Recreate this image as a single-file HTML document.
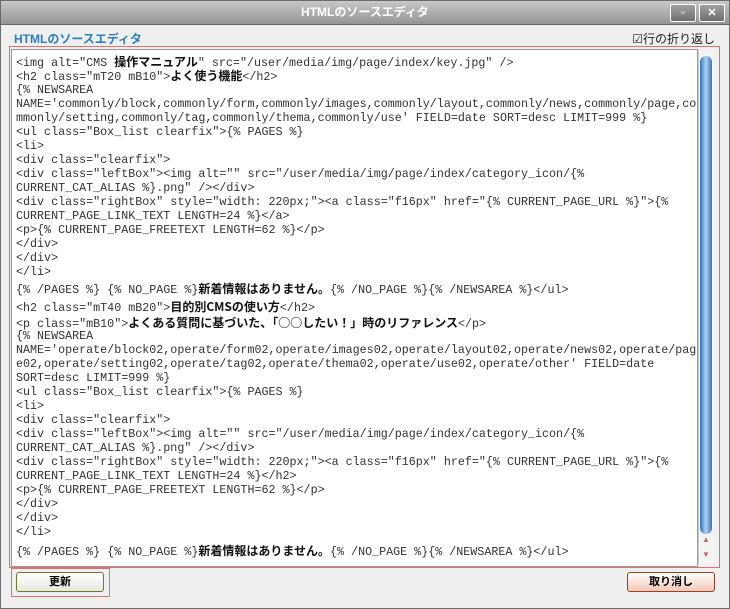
<!DOCTYPE html>
<html><head><meta charset="utf-8"><style>
body{margin:0;width:730px;height:609px;background:#ededed;font-family:"Liberation Sans","Noto Sans CJK JP",sans-serif;position:relative;overflow:hidden}
.win{position:absolute;left:0;top:0;width:728px;height:607px;border:1px solid #6b6b6b;background:#efefef}
.tb{height:23px;background:linear-gradient(#c8c8c8,#959595);border-bottom:1px solid #666;color:#fff;font-weight:bold;font-size:12px;text-align:center;line-height:23px}
.btn{position:absolute;top:3px;width:24px;height:16px;border:1px solid #fff;border-radius:2px;background:linear-gradient(#a0a0a0,#707070);color:#fff;font-size:11px;line-height:16px;text-align:center;font-weight:bold}
.h{position:absolute;left:13px;top:30px;color:#2f7fc0;font-weight:bold;font-size:12px;line-height:16px}
.wrap{position:absolute;right:14px;top:30px;font-size:12px;color:#222;line-height:16px}
.red{position:absolute;left:8px;top:45px;width:709px;height:520px;border:1px solid #e07070}
.ta{position:absolute;left:10px;top:48px;width:685px;height:516px;background:#fff;border:1px solid #9a9a9a;overflow:hidden}
.code{position:absolute;left:4px;top:4px;font-family:"Liberation Mono","Noto Sans CJK JP",monospace;font-size:11.7px;color:#333}
.code div{height:14px;line-height:14px;white-space:pre}
.code b{font-family:"Noto Sans CJK JP",sans-serif;font-weight:bold;color:#111;font-size:12px}
.sb{position:absolute;left:697px;top:49px;width:15px;height:514px;background:#f3f3f3;border-left:1px solid #ccc}
.th{position:absolute;left:1px;top:6px;width:12px;height:478px;border-radius:6px;background:linear-gradient(90deg,#3b6fb8,#a8d4f5 50%,#3b6fb8);}
.b1{position:absolute;left:15px;top:571px;width:86px;height:18px;border:1px solid #6b7a2c;border-radius:3px;background:linear-gradient(#fff,#e8e8de);font-size:11px;text-align:center;line-height:18px;font-weight:bold}
.b1o{position:absolute;left:10px;top:567px;width:97px;height:27px;border:1px solid #e07070}
.b2{position:absolute;left:626px;top:571px;width:86px;height:18px;border:1px solid #a04020;border-radius:3px;background:linear-gradient(#fff,#f3c8b8);font-size:11px;text-align:center;line-height:18px;font-weight:bold}
</style></head><body><div class="win">
<div class="tb">HTMLのソースエディタ</div>
<div class="btn" style="left:669px">▫</div><div class="btn" style="left:698px">✕</div>
<div class="h">HTMLのソースエディタ</div>
<div class="wrap">☑行の折り返し</div>
<div class="red"></div>
<div class="ta"><div class="code"><div style="height:15px;line-height:15px">&lt;img alt="CMS <b>操作マニュアル</b>" src="/user/media/img/page/index/key.jpg" /&gt;</div><div>&lt;h2 class="mT20 mB10"&gt;<b>よく使う機能</b>&lt;/h2&gt;</div><div>{% NEWSAREA</div><div>NAME='commonly/block,commonly/form,commonly/images,commonly/layout,commonly/news,commonly/page,co</div><div>mmonly/setting,commonly/tag,commonly/thema,commonly/use' FIELD=date SORT=desc LIMIT=999 %}</div><div>&lt;ul class="Box_list clearfix"&gt;{% PAGES %}</div><div>&lt;li&gt;</div><div>&lt;div class="clearfix"&gt;</div><div>&lt;div class="leftBox"&gt;&lt;img alt="" src="/user/media/img/page/index/category_icon/{%</div><div>CURRENT_CAT_ALIAS %}.png" /&gt;&lt;/div&gt;</div><div>&lt;div class="rightBox" style="width: 220px;"&gt;&lt;a class="f16px" href="{% CURRENT_PAGE_URL %}"&gt;{%</div><div>CURRENT_PAGE_LINK_TEXT LENGTH=24 %}&lt;/a&gt;</div><div>&lt;p&gt;{% CURRENT_PAGE_FREETEXT LENGTH=62 %}&lt;/p&gt;</div><div>&lt;/div&gt;</div><div>&lt;/div&gt;</div><div style="height:15px">&lt;/li&gt;</div><div style="height:18px;line-height:18px">{% /PAGES %} {% NO_PAGE %}<b>新着情報はありません。</b>{% /NO_PAGE %}{% /NEWSAREA %}&lt;/ul&gt;</div><div style="height:18px;line-height:18px">&lt;h2 class="mT40 mB20"&gt;<b>目的別CMSの使い方</b>&lt;/h2&gt;</div><div style="height:13px;line-height:13px">&lt;p class="mB10"&gt;<b>よくある質問に基づいた、「○○したい！」時のリファレンス</b>&lt;/p&gt;</div><div>{% NEWSAREA</div><div>NAME='operate/block02,operate/form02,operate/images02,operate/layout02,operate/news02,operate/pag</div><div>e02,operate/setting02,operate/tag02,operate/thema02,operate/use02,operate/other' FIELD=date</div><div>SORT=desc LIMIT=999 %}</div><div>&lt;ul class="Box_list clearfix"&gt;{% PAGES %}</div><div>&lt;li&gt;</div><div>&lt;div class="clearfix"&gt;</div><div>&lt;div class="leftBox"&gt;&lt;img alt="" src="/user/media/img/page/index/category_icon/{%</div><div>CURRENT_CAT_ALIAS %}.png" /&gt;&lt;/div&gt;</div><div>&lt;div class="rightBox" style="width: 220px;"&gt;&lt;a class="f16px" href="{% CURRENT_PAGE_URL %}"&gt;{%</div><div>CURRENT_PAGE_LINK_TEXT LENGTH=24 %}&lt;/h2&gt;</div><div>&lt;p&gt;{% CURRENT_PAGE_FREETEXT LENGTH=62 %}&lt;/p&gt;</div><div>&lt;/div&gt;</div><div>&lt;/div&gt;</div><div style="height:17px">&lt;/li&gt;</div><div style="height:18px;line-height:18px">{% /PAGES %} {% NO_PAGE %}<b>新着情報はありません。</b>{% /NO_PAGE %}{% /NEWSAREA %}&lt;/ul&gt;</div></div></div>
<div class="sb"><div class="th"></div><div style="position:absolute;top:485px;left:3px;font-size:8px;color:#c66">▲</div><div style="position:absolute;top:500px;left:3px;font-size:8px;color:#c66">▼</div></div>
<div class="b1o"></div>
<div class="b1">更新</div>
<div class="b2">取り消し</div>
</div></body></html>
